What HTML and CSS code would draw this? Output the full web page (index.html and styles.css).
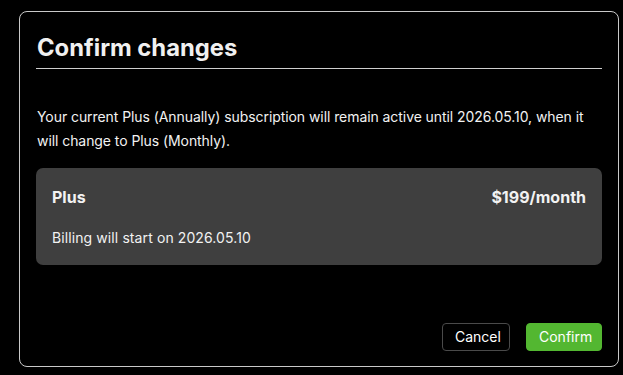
FILE: index.html
```html
<!DOCTYPE html>
<html lang="en">
<head>
<meta charset="utf-8">
<title>Confirm changes</title>
<link rel="stylesheet" href="styles.css">
</head>
<body>
<div class="modal">
  <h1 class="modal-title">Confirm changes</h1>
  <p class="modal-text">Your current Plus (Annually) subscription will remain active until 2026.05.10, when it will change to Plus (Monthly).</p>
  <div class="plan-card">
    <div class="plan-head">
      <span class="plan-name">Plus</span>
      <span class="plan-price">$199/month</span>
    </div>
    <div class="plan-note">Billing will start on 2026.05.10</div>
  </div>
  <div class="actions">
    <button class="btn btn-cancel">Cancel</button>
    <button class="btn btn-confirm">Confirm</button>
  </div>
</div>
</body>
</html>
```
FILE: styles.css
```css
html, body {
  margin: 0;
  padding: 0;
  background: #000;
}
body {
  font-family: Inter, "Noto Sans", "Liberation Sans", sans-serif;
  color: #f2f2f2;
  padding: 11px 0 0 19px;
}
.modal {
  box-sizing: border-box;
  width: 600px;
  height: 356px;
  border: 1px solid #c9c9c9;
  border-radius: 8px;
  background: #000;
  padding: 0 16px 15px 16px;
  display: flex;
  flex-direction: column;
}
.modal-title {
  margin: 0;
  padding: 21px 0 5px 1px;
  font-size: 23.8px;
  font-weight: 700;
  line-height: 30px;
  border-bottom: 1px solid #cfcfcf;
  color: #f0f0f0;
}
.modal-text {
  margin: 36px 0 0 1px;
  font-size: 14px;
  letter-spacing: -0.07px;
  line-height: 24px;
}
.plan-card {
  margin-top: 15px;
  background: #3f3f3f;
  border-radius: 7px;
  padding: 17px 16px 15px 16px;
}
.plan-head {
  display: flex;
  justify-content: space-between;
  font-size: 16px;
  font-weight: 700;
  line-height: 24px;
}
.plan-note {
  margin-top: 17px;
  font-size: 14px;
  letter-spacing: 0.1px;
  line-height: 24px;
}
.actions {
  margin-top: auto;
  display: flex;
  justify-content: flex-end;
  gap: 16px;
}
.btn {
  font-family: inherit;
  font-size: 14px;
  font-weight: 400;
  line-height: 26px;
  height: 28px;
  border-radius: 4px;
  color: #fff;
  padding: 0 12px 1px;
  cursor: pointer;
}
.btn-cancel {
  background: #000;
  border: 1px solid #4a4a4a;
  width: 68px;
}
.btn-confirm {
  background: #53b731;
  border: 1px solid #53b731;
  width: 76px;
}
```
